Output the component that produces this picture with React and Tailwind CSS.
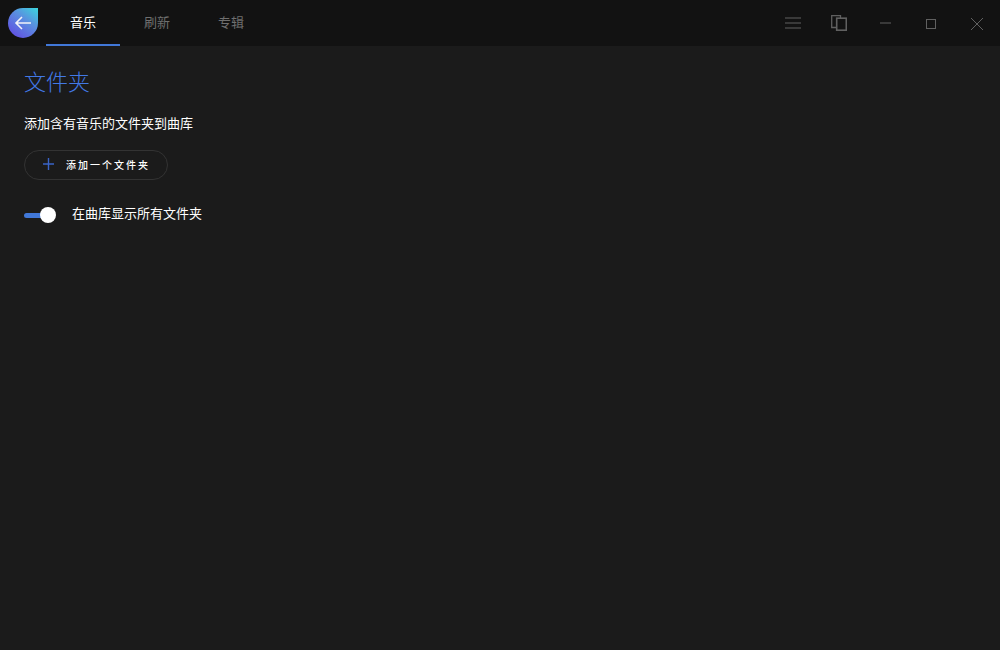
const font = { fontFamily: '"Noto Sans CJK SC", "Noto Sans", sans-serif' };

function Tab({ label, active }) {
  return (
    <div className={`w-[74px] h-[46px] flex items-center justify-center border-b-2 text-[13px] ${active ? "border-[#4178d8] text-white" : "border-transparent text-[#6f6f6f]"}`}>
      {label}
    </div>
  );
}

function Logo() {
  return (
    <svg width="30" height="30" viewBox="0 0 30 30" className="block">
      <defs>
        <linearGradient id="lg" x1="1" y1="0" x2="0.25" y2="1">
          <stop offset="0" stopColor="#3bd6dc" />
          <stop offset="0.45" stopColor="#5a8fe0" />
          <stop offset="1" stopColor="#6150e2" />
        </linearGradient>
      </defs>
      <path d="M15 0H30V15A15 15 0 0 1 0 15A15 15 0 0 1 15 0Z" fill="url(#lg)" />
      <path d="M23 15H8M14 9L8 15L14 21" fill="none" stroke="#f2f2f8" strokeWidth="1.6" />
    </svg>
  );
}

export default function App() {
  return (
    <div className="w-[1000px] h-[650px] overflow-hidden bg-[#1b1b1b] flex flex-col" style={font}>
      <header className="h-[46px] bg-[#121212] flex items-center shrink-0">
        <div className="ml-2 w-[30px] h-[30px]"><Logo /></div>
        <nav className="ml-2 flex">
          <Tab label="音乐" active />
          <Tab label="刷新" />
          <Tab label="专辑" />
        </nav>
        <div className="ml-auto flex items-center text-[#606060]">
          <svg width="16" height="12" viewBox="0 0 16 12" className="block mr-[30px]" fill="none" stroke="currentColor" strokeWidth="1.2">
            <path d="M0 1H16M0 6H16M0 11H16" />
          </svg>
          <svg width="16" height="16" viewBox="0 0 16 16" className="block mr-[33px]" fill="none" stroke="currentColor" strokeWidth="1.3">
            <path d="M5 12.5H.7V.7H9.5V3" />
            <rect x="5.7" y="3.2" width="9.6" height="12" strokeWidth="1.6" />
          </svg>
          <svg width="11" height="2" viewBox="0 0 11 2" className="block mr-[35px]" fill="none" stroke="currentColor" strokeWidth="1">
            <path d="M0 1H11" />
          </svg>
          <svg width="10" height="10" viewBox="0 0 10 10" className="block mr-[35px] mt-[1px]" fill="none" stroke="currentColor" strokeWidth="1">
            <rect x=".5" y=".5" width="9" height="9" />
          </svg>
          <svg width="12" height="12" viewBox="0 0 12 12" className="block mr-[17px] mt-[1px]" fill="none" stroke="currentColor" strokeWidth="1">
            <path d="M0 0L12 12M12 0L0 12" />
          </svg>
        </div>
      </header>
      <main className="px-6 flex flex-col items-start">
        <h1 className="mt-[18px] text-[22px] leading-[33px] font-light text-[#4279e6]">文件夹</h1>
        <p className="mt-[16px] text-[13px] leading-[20px] text-white">添加含有音乐的文件夹到曲库</p>
        <button className="mt-[17px] w-[144px] h-[30px] rounded-full border border-[#333333] flex items-center pl-[18px] text-white">
          <svg width="11" height="12" viewBox="0 0 11 12" className="block mb-[2px]" fill="none" stroke="#3a64c8" strokeWidth="1.4">
            <path d="M5.5 0V12M0 6H11" />
          </svg>
          <span className="ml-[12px] text-[10px] leading-[14px] font-medium tracking-[2px]">添加一个文件夹</span>
        </button>
        <div className="mt-[24px] flex items-center h-[22px]">
          <div className="relative w-[32px] h-[16px] flex items-center">
            <div className="w-[24px] h-[5px] rounded-full bg-[#4178d8]" />
            <div className="absolute right-0 top-0 w-[16px] h-[16px] rounded-full bg-white" />
          </div>
          <span className="ml-[16px] text-[13px] leading-[20px] text-white -mt-[4px]">在曲库显示所有文件夹</span>
        </div>
      </main>
    </div>
  );
}
